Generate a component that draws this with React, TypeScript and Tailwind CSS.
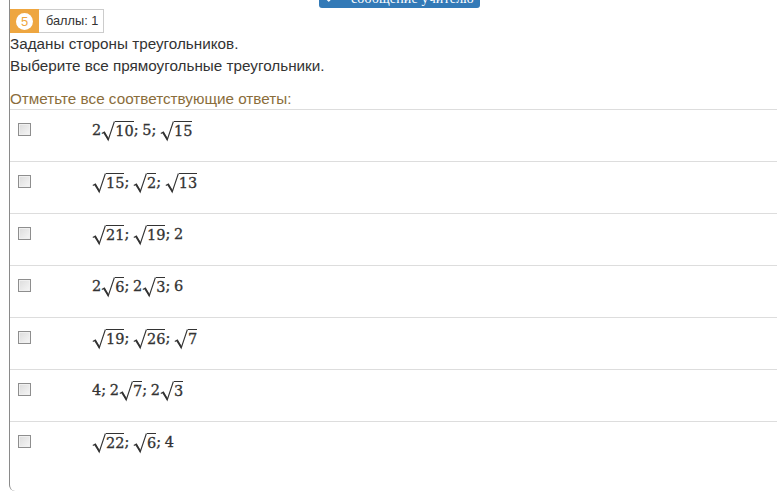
import React from "react";
import { Check } from "lucide-react";

const Sqrt = ({ children }: { children: React.ReactNode }) => (
  <span className="inline-flex items-start h-[22px] align-middle">
    <svg width="14" height="22" viewBox="0 0 14 22" className="shrink-0">
      <path d="M0.8 13.5 L3.4 12 L7.2 20 L13.4 1.5" fill="none" stroke="#333" strokeWidth="1.1" />
      <path d="M3 12.4 L7.4 19.2" fill="none" stroke="#333" strokeWidth="1.9" />
    </svg>
    <span className="border-t border-[#333] leading-[19px] mt-[1px] h-[20px]">{children}</span>
  </span>
);

const Chk = () => (
  <span className="block w-[13px] h-[13px] border border-[#8e8e8e] bg-gradient-to-br from-[#dcdcdc] to-[#f6f6f6] shadow-[inset_0_0_0_1px_#f0f0f0]" />
);

const rows: React.ReactNode[] = [
  <>2<Sqrt>10</Sqrt>; 5; <Sqrt>15</Sqrt></>,
  <><Sqrt>15</Sqrt>; <Sqrt>2</Sqrt>; <Sqrt>13</Sqrt></>,
  <><Sqrt>21</Sqrt>; <Sqrt>19</Sqrt>; 2</>,
  <>2<Sqrt>6</Sqrt>; 2<Sqrt>3</Sqrt>; 6</>,
  <><Sqrt>19</Sqrt>; <Sqrt>26</Sqrt>; <Sqrt>7</Sqrt></>,
  <>4; 2<Sqrt>7</Sqrt>; 2<Sqrt>3</Sqrt></>,
  <><Sqrt>22</Sqrt>; <Sqrt>6</Sqrt>; 4</>,
];

export default function App() {
  return (
    <div className="relative w-[777px] h-[495px] overflow-hidden bg-white font-['Liberation_Sans',sans-serif] text-[#333]">
      <div className="absolute left-[319px] top-0 w-[161px] h-[8px] bg-[#337ab7] rounded-b-[3px] overflow-hidden flex">
        <Check className="absolute left-[6px] -top-[6px] text-white" size={10} strokeWidth={3} />
        <div className="text-white text-[14px] leading-none font-['Liberation_Serif',serif] -mt-[8px] ml-[32px] whitespace-nowrap tracking-[0.15px]">сообщение учителю</div>
      </div>
      <div className="ml-[9px] h-[491px] border-l border-[#8a8a8a] rounded-bl-[6px] pt-[9px]">
        <div className="flex h-[24px] w-[94px]">
          <div className="w-[29px] bg-[#eea640] flex items-center justify-center">
            <span className="w-[17px] h-[17px] rounded-full bg-white text-[#eea640] text-[13px] leading-[17px] text-center">5</span>
          </div>
          <div className="flex-1 border border-l-0 border-[#ccc] flex items-center pl-[7px] text-[12.75px]">баллы: 1</div>
        </div>
        <div className="text-[15.25px] leading-[22px]">
          <p>Заданы стороны треугольников.</p>
          <p>Выберите все прямоугольные треугольники.</p>
        </div>
        <div className="text-[15.25px] leading-[22px] text-[#8a6d3b] mt-[11px] h-[21px]">Отметьте все соответствующие ответы:</div>
        {rows.map((r, i) => (
          <div key={i} className="h-[52px] border-t border-[#ddd] flex items-start">
            <div className="w-[82px] pl-[8px] pt-[13px] shrink-0"><Chk /></div>
            <div className="pt-[9px] font-['DejaVu_Serif',serif] text-[14.5px] leading-[22px] text-[#333] whitespace-nowrap [-webkit-text-stroke:0.3px_#333] [word-spacing:-1px]">{r}</div>
          </div>
        ))}
      </div>
    </div>
  );
}
